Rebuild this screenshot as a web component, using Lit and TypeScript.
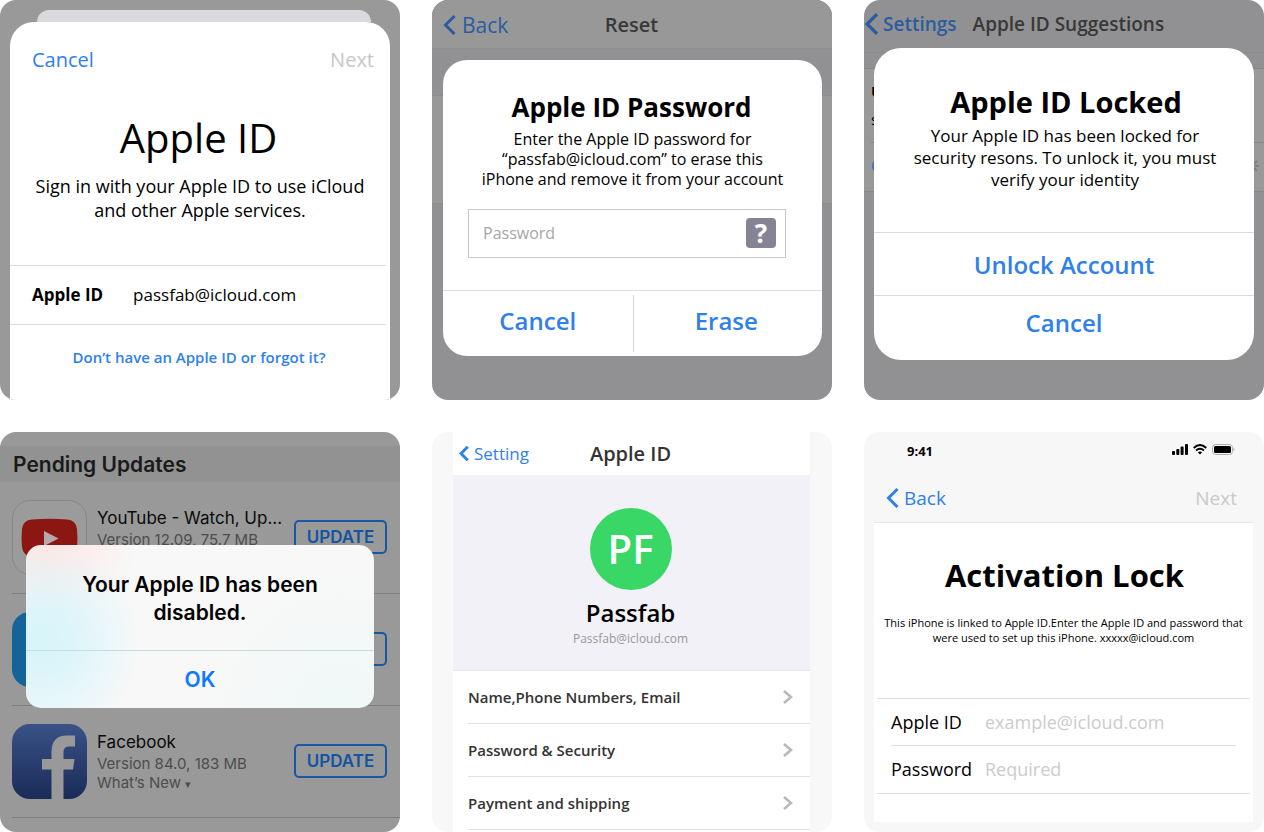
import { LitElement, html, css, svg, nothing } from "lit";
import { customElement } from "lit/decorators.js";

const base = css`
  :host {
    display: block;
    box-sizing: border-box;
    position: relative;
    min-width: 0;
    aspect-ratio: 1;
    border-radius: 16px;
    overflow: hidden;
    font-family: "Open Sans", "Noto Sans", sans-serif;
    color: #000;
  }
  * {
    box-sizing: border-box;
  }
  h2,
  h3,
  p,
  ul {
    margin: 0;
    padding: 0;
  }
  ul {
    list-style: none;
  }
  button,
  input {
    font: inherit;
    color: inherit;
    margin: 0;
    padding: 0;
    border: 0;
    background: none;
    min-width: 0;
  }
  input {
    outline: none;
  }
  a {
    color: inherit;
    text-decoration: none;
  }
  svg {
    display: block;
    flex: none;
  }
`;

const backChevron = (width: number, height: number, stroke: number) => html`
  <svg width=${width} height=${height} viewBox="0 0 12 20" fill="none" stroke="currentColor" stroke-width=${stroke} aria-hidden="true">
    <path d="M11 1 L2 10 L11 19" />
  </svg>
`;

@customElement("sign-in-tile")
export class SignInTile extends LitElement {
  static styles = [
    base,
    css`
      :host {
        display: flex;
        flex-direction: column;
        padding: 10px 10px 0;
        background: #999;
      }
      .peek {
        height: 12px;
        margin: 0 19px 0 27px;
        border-radius: 12px 12px 0 0;
        background: #dad9de;
      }
      .sheet {
        flex: 1;
        border-radius: 24px 24px 0 0;
        background: #fff;
      }
      .bar {
        display: flex;
        justify-content: space-between;
        padding: 24px 16px 24px 22px;
        font-size: 20px;
        line-height: 28px;
      }
      .blue {
        color: #2f80ed;
      }
      .muted {
        color: #c7c7c7;
      }
      h2 {
        padding: 12px 3px 8px 0;
        font-size: 40px;
        font-weight: 400;
        line-height: 56px;
        text-align: center;
      }
      .intro {
        font-size: 18px;
        line-height: 24px;
        text-align: center;
        white-space: nowrap;
      }
      .row {
        display: flex;
        align-items: center;
        gap: 30px;
        margin: 43px 4px 0 0;
        padding: 0 22px 2px;
        height: 60px;
        border: solid #dcdcdc;
        border-width: 1px 0;
        font-size: 17px;
      }
      .row label {
        font-weight: 700;
      }
      .row input {
        flex: 1;
      }
      .help {
        display: block;
        padding: 20px 2px 0 0;
        font-size: 15px;
        font-weight: 600;
        line-height: 24px;
        text-align: center;
      }
    `,
  ];

  render() {
    return html`
      <div class="peek"></div>
      <section class="sheet">
        <div class="bar">
          <button class="blue">Cancel</button>
          <button class="muted" disabled>Next</button>
        </div>
        <h2>Apple ID</h2>
        <p class="intro">Sign in with your Apple ID to use iCloud<br />and other Apple services.</p>
        <div class="row">
          <label for="account">Apple ID</label>
          <input id="account" type="email" .value=${"passfab@icloud.com"} />
        </div>
        <a class="help blue" href="#help">Don’t have an Apple ID or forgot it?</a>
      </section>
    `;
  }
}

@customElement("erase-tile")
export class EraseTile extends LitElement {
  static styles = [
    base,
    css`
      :host {
        background: #919193;
      }
      .nav {
        display: grid;
        grid-template-columns: 1fr auto 1fr;
        align-items: center;
        height: 49px;
        padding: 0 12px 0 11px;
        border-bottom: 1px solid #8e8e91;
        background: #989898;
      }
      .nav h3 {
        color: #383838;
        font-size: 20px;
        font-weight: 600;
      }
      .back {
        display: flex;
        align-items: center;
        gap: 6px;
        padding-top: 2px;
        color: #2c5c9f;
        font-size: 21px;
        line-height: 28px;
      }
      .cell {
        height: 109px;
        margin-top: 46px;
        border: solid #8b8b8e;
        border-width: 1px 0;
        background: #999;
      }
      .dialog {
        position: absolute;
        inset: 60px 10px auto 11px;
        border-radius: 24px;
        background: #fff;
        text-align: center;
      }
      .dialog h2 {
        padding: 29px 2px 4px 0;
        font-size: 26px;
        line-height: 36px;
      }
      .dialog p {
        font-size: 16px;
        line-height: 20px;
      }
      .field {
        display: flex;
        align-items: center;
        height: 49px;
        margin: 20px 36px 32px 25px;
        padding: 0 9px 1px 14px;
        border: 1px solid #c8c8c8;
        font-size: 16px;
      }
      .field input {
        flex: 1;
      }
      .field input::placeholder {
        color: #a6a6a6;
        opacity: 1;
      }
      .hint {
        width: 30px;
        height: 30px;
        border-radius: 4px;
        background: #868494;
        color: #fff;
        font-size: 26px;
        font-weight: 700;
        line-height: 30px;
        text-align: center;
      }
      .actions {
        display: grid;
        grid-template-columns: 1fr 1fr;
        padding: 4px 0;
        border-top: 1px solid #dedede;
        color: #2f80ed;
        font-size: 24px;
        font-weight: 600;
      }
      .actions button {
        height: 57px;
        padding-bottom: 6px;
      }
      .actions button + button {
        padding-right: 3px;
        border-left: 1px solid #d6d6d6;
      }
    `,
  ];

  render() {
    return html`
      <div class="nav">
        <button class="back">${backChevron(13, 20, 3)}Back</button>
        <h3>Reset</h3>
      </div>
      <div class="cell"></div>
      <section class="dialog" role="dialog" aria-labelledby="title">
        <h2 id="title">Apple ID Password</h2>
        <p>Enter the Apple ID password for<br />“passfab@icloud.com” to erase this<br />iPhone and remove it from your account</p>
        <div class="field">
          <input type="password" placeholder="Password" aria-label="Password" />
          <button class="hint" aria-label="Help">?</button>
        </div>
        <div class="actions"><button>Cancel</button><button>Erase</button></div>
      </section>
    `;
  }
}

@customElement("locked-tile")
export class LockedTile extends LitElement {
  static styles = [
    base,
    css`
      :host {
        background: #919193;
      }
      .nav {
        display: flex;
        align-items: center;
        gap: 16px;
        height: 53px;
        padding: 0 0 5px 1px;
        border-bottom: 1px solid #8b8b8e;
        font-size: 19px;
        font-weight: 600;
        white-space: nowrap;
      }
      .nav h3 {
        color: #383838;
        font-size: 19px;
        font-weight: 600;
      }
      .back {
        display: flex;
        align-items: center;
        gap: 5px;
        color: #2c5c9f;
      }
      .list {
        margin-top: 15px;
        border: solid #858588;
        border-width: 1px 0;
        background: #999;
      }
      .entry {
        height: 73px;
        padding: 8px 7px 0;
        font-size: 15px;
        line-height: 28px;
      }
      .entry b {
        display: block;
      }
      .more {
        display: flex;
        align-items: center;
        justify-content: space-between;
        height: 49px;
        margin-left: 7px;
        padding: 0 5px 2px 0;
        border-top: 1px solid #868689;
        color: #2c6fc4;
        font-size: 16px;
      }
      .more svg {
        color: #808083;
      }
      .dialog {
        position: absolute;
        inset: 48px 10px auto;
        border-radius: 27px;
        background: #fff;
        text-align: center;
        overflow: hidden;
      }
      .dialog h2 {
        padding: 34px 0 3px 4px;
        font-size: 29px;
        line-height: 40px;
      }
      .dialog p {
        padding: 0 0 41px 2px;
        font-size: 17px;
        line-height: 22px;
        white-space: nowrap;
      }
      .dialog button {
        display: block;
        width: 100%;
        height: 63px;
        border-top: 1px solid #dcdcdc;
        color: #2f80ed;
        font-size: 24px;
        font-weight: 600;
      }
      .dialog button:last-child {
        height: 65px;
        padding-bottom: 11px;
      }
    `,
  ];

  render() {
    return html`
      <div class="nav">
        <button class="back">${backChevron(13, 22, 3)}Settings</button>
        <h3>Apple ID Suggestions</h3>
      </div>
      <div class="list">
        <div class="entry"><b>U</b>s</div>
        <div class="more">
          C
          <svg width="14" height="14" viewBox="0 0 14 14" stroke="currentColor" stroke-width="2" aria-hidden="true">
            <path d="M7 0V4M7 10V14M0 7H4M10 7H14M2 2L5 5M9 9L12 12M2 12L5 9M9 5L12 2" />
          </svg>
        </div>
      </div>
      <section class="dialog" role="dialog" aria-labelledby="title">
        <h2 id="title">Apple ID Locked</h2>
        <p>Your Apple ID has been locked for<br />security resons. To unlock it, you must<br />verify your identity</p>
        <button>Unlock Account</button>
        <button>Cancel</button>
      </section>
    `;
  }
}

interface AppUpdate {
  name: string;
  version: string;
  notes: boolean;
  icon: unknown;
}

const youtubeIcon = svg`
  <rect x="0.5" y="0.5" width="74" height="74" rx="18" fill="#9b9b9b" stroke="#868686" />
  <path d="M20 19.500 Q38 18 55 19.500 Q64 20 65 29 Q66 38 65 47 Q64 56 55 56.500 Q38 58 20 56.500 Q11 56 10 47 Q9 38 10 29 Q11 20 20 19.500Z" fill="#8c1712" />
  <path d="M32 31 L46.500 38.500 L32 46Z" fill="#b5a9a9" />
`;
const blueIcon = svg`<rect width="75" height="75" rx="18" fill="#14649a" />`;
const facebookIcon = svg`
  <defs>
    <linearGradient id="fb" x1="0" y1="0" x2="0" y2="1">
      <stop offset="0" stop-color="#3a5288" />
      <stop offset="1" stop-color="#1a2b57" />
    </linearGradient>
  </defs>
  <rect width="75" height="75" rx="18" fill="url(#fb)" />
  <path d="M39.500 75V45.500H30V35H39.500V28Q39.500 11.500 55 11.500H63V22.500H57Q51.500 22.500 51.500 28V35H62.500L61 45.500H51.500V75Z" fill="#999" />
`;

@customElement("updates-tile")
export class UpdatesTile extends LitElement {
  static styles = [
    base,
    css`
      :host {
        padding-top: 14px;
        background: #999;
        font-family: Inter, "Liberation Sans", sans-serif;
      }
      .heading {
        padding: 1px 13px 0;
        background: #929292;
        color: #1a1a1a;
        font-size: 21px;
        font-weight: 600;
        line-height: 35px;
      }
      .app {
        display: flex;
        align-items: center;
        gap: 10px;
        height: 112px;
        margin-left: 12px;
        padding: 0 13px 1px 0;
        border-bottom: 1px solid #7f7f7f;
      }
      .info {
        flex: 1;
        min-width: 0;
        height: 75px;
        padding-top: 6px;
        color: #4d4d4d;
        font-size: 15px;
        line-height: 19px;
        white-space: nowrap;
      }
      .info h3 {
        color: #0a0a0a;
        font-size: 17px;
        font-weight: 400;
        line-height: 24px;
      }
      .info small {
        font-size: 11px;
      }
      .update {
        width: 93px;
        height: 34px;
        border: 2px solid #1757a3;
        border-radius: 5px;
        color: #1453a0;
        font-size: 17px;
        font-weight: 600;
      }
      .alert {
        position: absolute;
        inset: 113px 26px auto;
        border-radius: 15px;
        background:
          radial-gradient(circle at 16px 98px, #d8f5fa 0, #dcf5fa 30px, #f8f8f800 100px),
          radial-gradient(circle at 20px 0, #fde6e4 0, #f8f8f800 90px),
          radial-gradient(circle at 90% 100%, #f0f8f8 0, #f8f8f800 140px),
          #f8f8f8;
        text-align: center;
        font-size: 21px;
        font-weight: 600;
      }
      .alert p {
        padding: 26px 0 23px;
        line-height: 28px;
      }
      .alert button {
        display: block;
        width: 100%;
        height: 58px;
        border-top: 1px solid #c4dde0;
        color: #0a7aff;
      }
    `,
  ];

  private apps: AppUpdate[] = [
    { name: "YouTube - Watch, Up...", version: "Version 12.09, 75.7 MB", notes: false, icon: youtubeIcon },
    { name: "", version: "", notes: false, icon: blueIcon },
    { name: "Facebook", version: "Version 84.0, 183 MB", notes: true, icon: facebookIcon },
  ];

  render() {
    return html`
      <h2 class="heading">Pending Updates</h2>
      ${this.apps.map(
        (app) => html`
          <div class="app">
            <svg width="75" height="75" viewBox="0 0 75 75" aria-hidden="true">${app.icon}</svg>
            <div class="info">
              <h3>${app.name}</h3>
              ${app.version}
              ${app.notes ? html`<br />What’s New <small>▾</small>` : nothing}
            </div>
            <button class="update">UPDATE</button>
          </div>
        `
      )}
      <section class="alert" role="alertdialog">
        <p>Your Apple ID has been<br />disabled.</p>
        <button>OK</button>
      </section>
    `;
  }
}

@customElement("profile-tile")
export class ProfileTile extends LitElement {
  static styles = [
    base,
    css`
      :host {
        padding: 0 22px 0 21px;
        background: #f8f8f8;
      }
      .page {
        height: 100%;
        background: #fff;
      }
      .nav {
        display: grid;
        grid-template-columns: 1fr auto 1fr;
        align-items: center;
        height: 43px;
        padding: 0 8px 0 6px;
      }
      .nav h3 {
        color: #333;
        font-size: 20px;
        font-weight: 600;
      }
      .back {
        display: flex;
        align-items: center;
        gap: 5px;
        color: #2f80ed;
        font-size: 17px;
      }
      .hero {
        display: flex;
        flex-direction: column;
        align-items: center;
        height: 196px;
        padding: 33px 2px 0 0;
        border-bottom: 1px solid #e6e6ea;
        background: #f2f1f7;
      }
      .avatar {
        display: grid;
        place-items: center;
        width: 82px;
        height: 82px;
        padding-bottom: 2px;
        border-radius: 50%;
        background: #39d866;
        color: #fff;
        font-size: 40px;
        font-weight: 600;
      }
      .hero h2 {
        padding-top: 7px;
        font-size: 24px;
        font-weight: 600;
        line-height: 32px;
      }
      .hero p {
        color: #999;
        font-size: 12px;
        line-height: 20px;
      }
      .item {
        display: flex;
        align-items: center;
        justify-content: space-between;
        height: 53px;
        margin-left: 15px;
        padding-right: 17px;
        border-bottom: 1px solid #e2e2e2;
        color: #333;
        font-size: 15px;
        font-weight: 600;
      }
      .item svg {
        color: #b8b8b8;
      }
    `,
  ];

  render() {
    return html`
      <div class="page">
        <div class="nav">
          <button class="back">${backChevron(10, 15, 4)}Setting</button>
          <h3>Apple ID</h3>
        </div>
        <div class="hero">
          <div class="avatar">PF</div>
          <h2>Passfab</h2>
          <p>Passfab@icloud.com</p>
        </div>
        <ul>
          ${["Name,Phone Numbers, Email", "Password & Security", "Payment and shipping"].map(
            (label) => html`
              <li>
                <a class="item" href="#item">
                  ${label}
                  <svg width="10" height="14" viewBox="0 0 10 14" fill="none" stroke="currentColor" stroke-width="2.500" aria-hidden="true">
                    <path d="M1 1 L8 7 L1 13" />
                  </svg>
                </a>
              </li>
            `
          )}
        </ul>
      </div>
    `;
  }
}

@customElement("activation-tile")
export class ActivationTile extends LitElement {
  static styles = [
    base,
    css`
      :host {
        display: flex;
        flex-direction: column;
        padding: 0 11px 10px 10px;
        background: #f7f7f7;
      }
      .status {
        display: flex;
        align-items: center;
        justify-content: space-between;
        height: 38px;
        padding: 0 18px 0 33px;
        font-size: 13px;
        font-weight: 700;
      }
      .glyphs {
        display: flex;
        gap: 5px;
        padding-bottom: 3px;
      }
      .bar {
        display: flex;
        align-items: center;
        justify-content: space-between;
        height: 53px;
        padding: 4px 16px 0 12px;
        border-bottom: 1px solid #e6e6e6;
        font-size: 19px;
      }
      .back {
        display: flex;
        align-items: center;
        gap: 5px;
        color: #2f80ed;
      }
      .muted {
        color: #c9c9c9;
      }
      .page {
        flex: 1;
        background: #fff;
      }
      h2 {
        padding: 30px 0 18px 2px;
        font-size: 31px;
        line-height: 44px;
        text-align: center;
      }
      p {
        font-size: 11px;
        line-height: 15px;
        text-align: center;
        white-space: nowrap;
      }
      .form {
        margin: 53px 3px 0;
        border: solid #dedede;
        border-width: 1px 0;
        font-size: 18px;
      }
      .field {
        display: grid;
        grid-template-columns: 94px 1fr;
        align-items: center;
        height: 46px;
        margin: 0 14px;
      }
      .field + .field {
        height: 48px;
        padding-bottom: 1px;
        border-top: 1px solid #dedede;
      }
      .field input::placeholder {
        color: #ccc;
        opacity: 1;
      }
    `,
  ];

  render() {
    return html`
      <div class="status">
        <span>9:41</span>
        <span class="glyphs">
          <svg width="16" height="11" viewBox="0 0 16 11" aria-hidden="true">
            <rect y="7" width="3" height="4" rx="1" />
            <rect x="4.300" y="5" width="3" height="6" rx="1" />
            <rect x="8.600" y="2.500" width="3" height="8.500" rx="1" />
            <rect x="13" width="3" height="11" rx="1" />
          </svg>
          <svg width="14" height="11" viewBox="0 0 14 11" fill="none" stroke="#000" stroke-width="1.900" aria-hidden="true">
            <path d="M.7 4 Q7 -1.800 13.300 4M3 6.500 Q7 3 11 6.500" />
            <path d="M7 10.500 L4.800 8.300 Q7 6.700 9.200 8.300Z" fill="#000" stroke="none" />
          </svg>
          <svg width="23" height="11" viewBox="0 0 23 11" aria-hidden="true">
            <rect x=".5" y=".5" width="20" height="10" rx="3" fill="none" stroke="#b0b0b0" />
            <rect x="2" y="2" width="17" height="7" rx="1.500" />
            <path d="M21.500 3.500 Q23.500 5.500 21.500 7.500Z" fill="#aaa" />
          </svg>
        </span>
      </div>
      <div class="bar">
        <button class="back">${backChevron(13, 20, 3)}Back</button>
        <button class="muted" disabled>Next</button>
      </div>
      <section class="page">
        <h2>Activation Lock</h2>
        <p>This iPhone is linked to Apple ID.Enter the Apple ID and password that<br />were used to set up this iPhone. xxxxx@icloud.com</p>
        <div class="form">
          <div class="field">
            <label for="id">Apple ID</label>
            <input id="id" type="email" placeholder="example@icloud.com" />
          </div>
          <div class="field">
            <label for="secret">Password</label>
            <input id="secret" type="password" placeholder="Required" />
          </div>
        </div>
      </section>
    `;
  }
}

@customElement("app-root")
export class AppRoot extends LitElement {
  static styles = css`
    :host {
      display: grid;
      grid-template-columns: repeat(3, minmax(0, 1fr));
      gap: 32px;
      background: #fff;
    }
  `;

  render() {
    return html`
      <sign-in-tile></sign-in-tile>
      <erase-tile></erase-tile>
      <locked-tile></locked-tile>
      <updates-tile></updates-tile>
      <profile-tile></profile-tile>
      <activation-tile></activation-tile>
    `;
  }
}
